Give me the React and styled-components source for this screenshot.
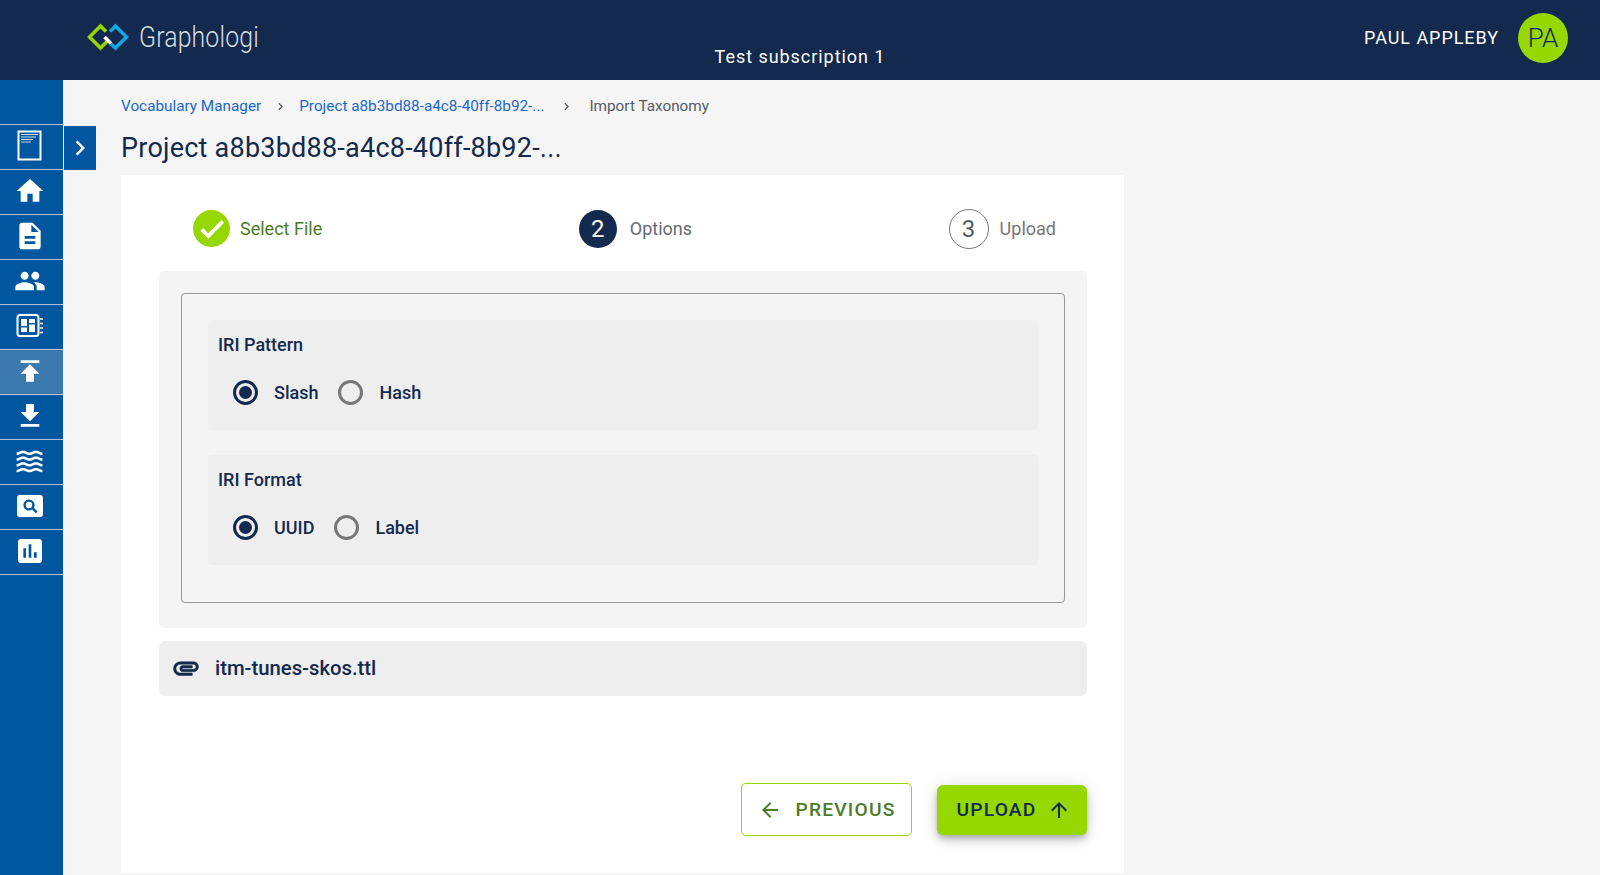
import React from 'react'
import styled, { createGlobalStyle } from 'styled-components'

const navy = '#132a4e'
const lime = '#97d700'
const blue = '#00579f'

const GlobalStyle = createGlobalStyle`
  html, body {
    margin: 0;
    padding: 0;
    height: 875px;
    overflow: hidden;
    background: #f5f5f5;
    font-family: Roboto, "Liberation Sans", sans-serif;
    color: ${navy};
  }
  * { box-sizing: border-box; }
`

const Header = styled.header`
  height: 80px;
  background: ${navy};
  display: grid;
  grid-template-columns: 1fr auto 1fr;
  padding: 0 32px;
`

const Logo = styled.div`
  display: flex;
  align-items: center;
  gap: 10px;
  height: 74px;
  padding-left: 55px;
`

const LogoText = styled.span`
  color: #d9dee5;
  font-size: 29px;
  font-weight: 300;
  letter-spacing: 0.2px;
  transform: scaleX(0.855);
  transform-origin: left center;
`

const Subscription = styled.div`
  color: #fff;
  font-size: 18px;
  letter-spacing: 0.95px;
  align-self: end;
  padding-bottom: 13px;
`

const User = styled.div`
  display: flex;
  align-items: center;
  justify-content: flex-end;
  gap: 19px;
  height: 76px;
`

const UserName = styled.span`
  color: #fff;
  font-size: 18px;
  font-weight: 400;
  letter-spacing: 0.95px;
  padding-bottom: 2px;
`

const Avatar = styled.div`
  width: 50px;
  height: 50px;
  border-radius: 50%;
  background: ${lime};
  color: ${navy};
  font-size: 26px;
  font-weight: 300;
  display: flex;
  align-items: center;
  justify-content: center;
`

const Body = styled.div`
  display: flex;
  height: 795px;
`

const Sidebar = styled.nav`
  position: relative;
  flex: 0 0 63px;
  background: ${blue};
  padding-top: 44px;
`

const NavItem = styled.div`
  height: 45px;
  border-top: 1px solid #a9c0d6;
  display: flex;
  align-items: center;
  justify-content: center;
  padding: 0 4px 2px 0;
  background: ${p => (p.$active ? '#3b79ae' : 'transparent')};
  &:last-of-type { height: 46px; border-bottom: 1px solid #a9c0d6; }
`

// flyout toggle hanging off the sidebar
const Toggle = styled.button`
  position: absolute;
  left: 64px;
  top: 46px;
  width: 32px;
  height: 44px;
  border: 0;
  padding: 0;
  background: ${blue};
  display: flex;
  align-items: center;
  justify-content: center;
`

const Main = styled.main`
  flex: 0 0 1003px;
  margin-left: 58px;
`

const Breadcrumbs = styled.div`
  display: flex;
  align-items: center;
  height: 52px;
  font-size: 15.3px;
  padding-bottom: 1px;
`

const Crumb = styled.span`
  color: ${p => (p.$current ? '#555b63' : '#1c68c9')};
`

const CrumbSep = styled.span`
  display: flex;
  margin: 2px ${p => p.$gap}px 0;
`

const Title = styled.h1`
  margin: 0;
  height: 43px;
  font-size: 27px;
  font-weight: 400;
  line-height: 32px;
  letter-spacing: 0.23px;
`

const Card = styled.section`
  height: 698px;
  background: #fff;
  padding: 0 37px 0 38px;
`

const Stepper = styled.div`
  height: 96px;
  display: flex;
  align-items: center;
  justify-content: space-between;
  padding: 11px 31px 0 34px;
`

const Step = styled.div`
  display: flex;
  align-items: center;
  gap: ${p => p.$gap}px;
`

const StepBadge = styled.div`
  width: ${p => p.$size}px;
  height: ${p => p.$size}px;
  border-radius: 50%;
  display: flex;
  align-items: center;
  justify-content: center;
  font-size: 24px;
  color: ${p => (p.$outlined ? '#555b63' : '#fff')};
  background: ${p => (p.$outlined ? '#fff' : p.$done ? lime : navy)};
  border: ${p => (p.$outlined ? '1px solid #777' : '0')};
`

const StepLabel = styled.span`
  font-size: 18px;
  color: ${p => p.$color};
`

const OptionsPanel = styled.div`
  background: #f4f4f4;
  border-radius: 5px;
  height: 357px;
  padding: 22px;
`

const OptionsBox = styled.div`
  border: 1px solid #999;
  border-radius: 4px;
  height: 310px;
  padding: 26px;
  display: flex;
  flex-direction: column;
  gap: 25px;
`

const Group = styled.div`
  background: #eee;
  border-radius: 4px;
  height: 110px;
  padding: 14px 10px 0;
`

const GroupLabel = styled.div`
  font-size: 18px;
  font-weight: 500;
  line-height: 21px;
`

const RadioRow = styled.div`
  display: flex;
  align-items: center;
  margin-top: 25px;
  padding-left: 15px;
`

const Radio = styled.span`
  width: 25px;
  height: 25px;
  border-radius: 50%;
  border: 3px solid ${p => (p.$checked ? navy : '#777')};
  display: flex;
  align-items: center;
  justify-content: center;
  margin-right: 16px;
  &::after {
    content: '';
    width: 13px;
    height: 13px;
    border-radius: 50%;
    background: ${p => (p.$checked ? navy : 'transparent')};
  }
`

const RadioText = styled.span`
  font-size: 18px;
  font-weight: 500;
  margin-right: 20px;
`

const FileRow = styled.div`
  margin-top: 13px;
  height: 55px;
  background: #eee;
  border-radius: 7px;
  display: flex;
  align-items: center;
  padding: 0 0 2px 12px;
  gap: 14px;
`

const FileName = styled.span`
  font-size: 20.3px;
  font-weight: 500;
`

const Actions = styled.div`
  margin-top: 87px;
  display: flex;
  justify-content: flex-end;
  align-items: center;
  gap: 25px;
`

const PrevButton = styled.button`
  width: 171px;
  height: 53px;
  background: #fff;
  border: 1px solid ${lime};
  border-radius: 5px;
  color: #4c7c25;
  font: 500 19.2px Roboto, sans-serif;
  letter-spacing: 1.2px;
  display: flex;
  align-items: center;
  justify-content: center;
  gap: 14px;
  padding: 0;
`

const UploadButton = styled.button`
  width: 150px;
  height: 50px;
  background: ${lime};
  border: 0;
  border-radius: 6px;
  color: ${navy};
  font: 500 19.2px Roboto, sans-serif;
  letter-spacing: 1.2px;
  display: flex;
  align-items: center;
  justify-content: center;
  gap: 10px;
  padding: 0 0 0 3px;
  box-shadow: 0 3px 5px -1px rgba(0,0,0,.2), 0 6px 10px 0 rgba(0,0,0,.14), 0 1px 18px 0 rgba(0,0,0,.12);
`

const Mi = ({ d, size = 24, color = '#fff', bold = 0 }) => (
  <svg width={size} height={size} viewBox="0 0 24 24" fill={color} stroke={bold ? color : 'none'} strokeWidth={bold}>
    <path d={d} />
  </svg>
)

const GraphologiMark = () => (
  <svg width="42" height="30" viewBox="0 0 42 30" fill="none" strokeWidth="3.6">
    <path d="M19 9.500 L13.500 4 L2.500 15 L13.500 26 L20 19.500" stroke={lime} />
    <path d="M23 9.500 L28.500 4 L39.500 15 L28.500 26 L24 22" stroke="#12a7e0" />
    <path d="M17.500 15 L24 21.500" stroke="#fff" />
  </svg>
)

const DocOutline = () => (
  <svg width="26" height="32" viewBox="0 0 26 32" fill="none">
    <rect x="1.500" y="1.500" width="22" height="28" stroke="#fff" strokeWidth="2" />
    <path d="M4 4.500h17M4 7h15M4 9.500h12" stroke="#cfe0ef" strokeWidth="1.200" />
    <path d="M4 12h10" stroke="#9fc0dc" strokeWidth="1.200" />
  </svg>
)

const Notebook = () => (
  <svg width="28" height="26" viewBox="0 0 28 26" fill="none">
    <rect x="1.500" y="2" width="21" height="21" rx="2.500" stroke="#fff" strokeWidth="2" />
    <path d="M5 6h6v7H5zM13 6h6v4h-6zM13 11.500h6V19h-6zM5 14.500h6V19H5z" fill="#fff" />
    <path d="M24 6h3M24 10.500h3M24 15h3M24 19.500h3" stroke="#fff" strokeWidth="1.600" />
  </svg>
)

const SearchCard = () => (
  <svg width="26" height="22" viewBox="0 0 26 22">
    <path
      fillRule="evenodd"
      fill="#fff"
      d="M3 0h20a3 3 0 0 1 3 3v16a3 3 0 0 1-3 3H3a3 3 0 0 1-3-3V3a3 3 0 0 1 3-3zM12 4.500a5.500 5.500 0 1 0 3.100 10l3.700 3.700 1.700-1.700-3.700-3.700A5.500 5.500 0 0 0 12 4.500zM12 6.800a3.200 3.200 0 1 1 0 6.400 3.200 3.200 0 0 1 0-6.400z"
    />
  </svg>
)

const home = 'M10 20v-6h4v6h5v-8h3L12 3 2 12h3v8z'
const description = 'M14 2H6c-1.100 0-1.990.9-1.990 2L4 20c0 1.100.89 2 1.990 2H18c1.100 0 2-.9 2-2V8l-6-6zm2 16H8v-2h8v2zm0-4H8v-2h8v2zm-3-5V3.500L18.500 9H13z'
const people = 'M16 11c1.660 0 2.990-1.340 2.990-3S17.660 5 16 5c-1.660 0-3 1.340-3 3s1.340 3 3 3zm-8 0c1.660 0 2.990-1.340 2.990-3S9.660 5 8 5C6.340 5 5 6.340 5 8s1.340 3 3 3zm0 2c-2.330 0-7 1.170-7 3.500V19h14v-2.500c0-2.330-4.670-3.500-7-3.500zm8 0c-.29 0-.62.02-.97.05 1.160.84 1.970 1.970 1.970 3.450V19h6v-2.500c0-2.330-4.670-3.500-7-3.500z'
const publish = 'M5 4v2h14V4H5zm0 10h4v6h6v-6h4l-7-7-7 7z'
const getApp = 'M19 9h-4V3H9v6H5l7 7 7-7zM5 18v2h14v-2H5z'
const waves = 'M17 16.990c-1.350 0-2.200.42-2.950.8-.65.33-1.180.6-2.050.6-.9 0-1.400-.25-2.050-.6-.75-.38-1.570-.8-2.950-.8s-2.200.42-2.950.8c-.65.33-1.170.6-2.050.6v1.950c1.350 0 2.200-.42 2.950-.8.65-.33 1.170-.6 2.050-.6s1.400.25 2.050.6c.75.38 1.570.8 2.950.8s2.200-.42 2.950-.8c.65-.33 1.180-.6 2.050-.6.9 0 1.400.25 2.050.6.75.38 1.580.8 2.950.8v-1.950c-.9 0-1.400-.25-2.050-.6-.75-.38-1.600-.8-2.950-.8zm0-4.450c-1.350 0-2.200.43-2.950.8-.65.32-1.180.6-2.050.6-.9 0-1.400-.25-2.050-.6-.75-.38-1.570-.8-2.950-.8s-2.200.43-2.950.8c-.65.32-1.170.6-2.050.6v1.950c1.350 0 2.200-.43 2.950-.8.65-.35 1.150-.6 2.050-.6s1.400.25 2.050.6c.75.38 1.570.8 2.950.8s2.200-.43 2.950-.8c.65-.35 1.150-.6 2.050-.6s1.400.25 2.050.6c.75.38 1.580.8 2.950.8v-1.950c-.9 0-1.400-.25-2.050-.6-.75-.38-1.600-.8-2.950-.8zm2.950-8.080c-.75-.38-1.580-.8-2.950-.8s-2.200.42-2.950.8c-.65.32-1.180.6-2.050.6-.9 0-1.400-.25-2.050-.6-.75-.37-1.570-.8-2.950-.8s-2.200.42-2.950.8c-.65.33-1.170.6-2.050.6v1.930c1.350 0 2.200-.43 2.950-.8.65-.33 1.170-.6 2.050-.6s1.400.25 2.050.6c.75.38 1.570.8 2.950.8s2.200-.43 2.950-.8c.65-.32 1.180-.6 2.050-.6.9 0 1.400.25 2.050.6.75.38 1.580.8 2.950.8V5.040c-.9 0-1.400-.25-2.050-.58zM17 8.090c-1.350 0-2.200.43-2.950.8-.65.35-1.150.6-2.050.6s-1.400-.25-2.050-.6c-.75-.38-1.570-.8-2.950-.8s-2.200.43-2.950.8c-.65.35-1.150.6-2.050.6v1.950c1.350 0 2.200-.43 2.950-.8.65-.32 1.180-.6 2.050-.6s1.400.25 2.050.6c.75.38 1.570.8 2.950.8s2.200-.43 2.950-.8c.65-.32 1.180-.6 2.050-.6.9 0 1.400.25 2.050.6.75.38 1.580.8 2.950.8V9.490c-.9 0-1.400-.25-2.050-.6-.75-.38-1.600-.8-2.950-.8z'
const assessment = 'M19 3H5c-1.100 0-2 .9-2 2v14c0 1.100.9 2 2 2h14c1.100 0 2-.9 2-2V5c0-1.100-.9-2-2-2zM9 17H7v-7h2v7zm4 0h-2V7h2v10zm4 0h-2v-4h2v4z'
const attachment = 'M2 12.500C2 9.460 4.460 7 7.500 7H18c2.210 0 4 1.790 4 4s-1.790 4-4 4H9.500C8.120 15 7 13.880 7 12.500S8.120 10 9.500 10H17v2H9.410c-.55 0-.55 1 0 1H18c1.100 0 2-.9 2-2s-.9-2-2-2H7.500C5.570 9 4 10.570 4 12.500S5.570 16 7.500 16H17v2H7.500C4.460 18 2 15.540 2 12.500z'
const arrowBack = 'M20 11H7.830l5.590-5.590L12 4l-8 8 8 8 1.410-1.410L7.830 13H20v-2z'
const arrowUp = 'M4 12l1.410 1.410L11 7.830V20h2V7.830l5.580 5.590L20 12l-8-8-8 8z'
const chevron = 'M8.590 16.590L13.170 12 8.590 7.410 10 6l6 6-6 6z'
const check = 'M9 16.170L4.830 12l-1.420 1.410L9 19 21 7l-1.410-1.410z'

const navIcons = [
  { key: 'doc', node: <DocOutline /> },
  { key: 'home', node: <Mi d={home} size={32} /> },
  { key: 'description', node: <Mi d={description} size={32} /> },
  { key: 'people', node: <Mi d={people} size={32} /> },
  { key: 'notebook', node: <Notebook /> },
  { key: 'publish', node: <Mi d={publish} size={32} />, active: true },
  { key: 'download', node: <Mi d={getApp} size={32} /> },
  { key: 'waves', node: <Mi d={waves} size={31} /> },
  { key: 'search', node: <SearchCard /> },
  { key: 'chart', node: <Mi d={assessment} size={32} /> },
]

const RadioGroup = ({ label, options }) => (
  <Group>
    <GroupLabel>{label}</GroupLabel>
    <RadioRow>
      {options.map((o, i) => (
        <React.Fragment key={o}>
          <Radio $checked={i === 0} />
          <RadioText>{o}</RadioText>
        </React.Fragment>
      ))}
    </RadioRow>
  </Group>
)

export default function App() {
  return (
    <>
      <GlobalStyle />
      <Header>
        <Logo>
          <GraphologiMark />
          <LogoText>Graphologi</LogoText>
        </Logo>
        <Subscription>Test subscription 1</Subscription>
        <User>
          <UserName>PAUL APPLEBY</UserName>
          <Avatar>PA</Avatar>
        </User>
      </Header>
      <Body>
        <Sidebar>
          {navIcons.map(n => (
            <NavItem key={n.key} $active={n.active}>{n.node}</NavItem>
          ))}
          <Toggle><Mi d={chevron} size={30} /></Toggle>
        </Sidebar>
        <Main>
          <Breadcrumbs>
            <Crumb>Vocabulary Manager</Crumb>
            <CrumbSep $gap={11.5}><Mi d={chevron} size={15} color="#555b63" /></CrumbSep>
            <Crumb>Project a8b3bd88-a4c8-40ff-8b92-...</Crumb>
            <CrumbSep $gap={15}><Mi d={chevron} size={15} color="#555b63" /></CrumbSep>
            <Crumb $current>Import Taxonomy</Crumb>
          </Breadcrumbs>
          <Title>Project a8b3bd88-a4c8-40ff-8b92-...</Title>
          <Card>
            <Stepper>
              <Step $gap={10}>
                <StepBadge $done $size={37}><Mi d={check} size={30} bold={1} /></StepBadge>
                <StepLabel $color="#4c7c25">Select File</StepLabel>
              </Step>
              <Step $gap={13}>
                <StepBadge $size={38}>2</StepBadge>
                <StepLabel $color="#666c74">Options</StepLabel>
              </Step>
              <Step $gap={11}>
                <StepBadge $outlined $size={40}>3</StepBadge>
                <StepLabel $color="#777">Upload</StepLabel>
              </Step>
            </Stepper>
            <OptionsPanel>
              <OptionsBox>
                <RadioGroup label="IRI Pattern" options={['Slash', 'Hash']} />
                <RadioGroup label="IRI Format" options={['UUID', 'Label']} />
              </OptionsBox>
            </OptionsPanel>
            <FileRow>
              <Mi d={attachment} size={30} color={navy} bold={0.4} />
              <FileName>itm-tunes-skos.ttl</FileName>
            </FileRow>
            <Actions>
              <PrevButton><Mi d={arrowBack} color="#4c7c25" />PREVIOUS</PrevButton>
              <UploadButton>UPLOAD<Mi d={arrowUp} color={navy} /></UploadButton>
            </Actions>
          </Card>
        </Main>
      </Body>
    </>
  )
}
